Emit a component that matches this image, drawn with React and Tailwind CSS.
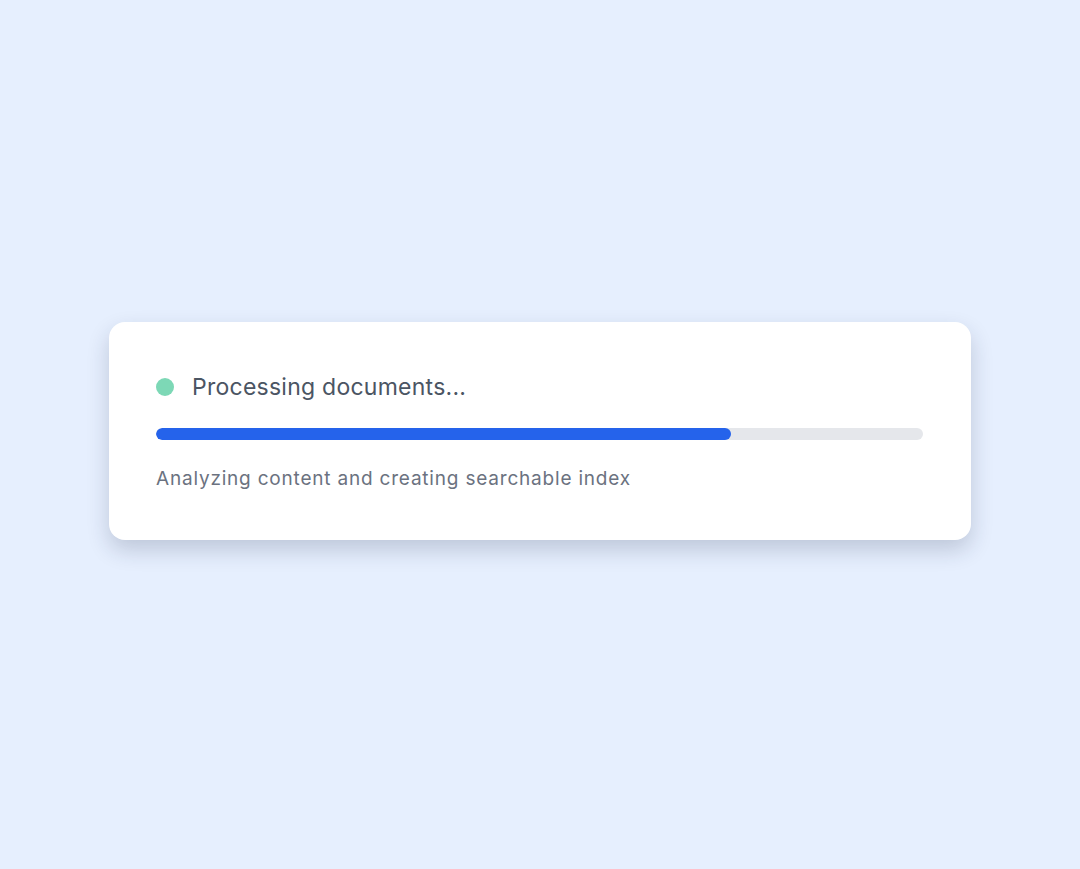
export default function App() {
  return (
    <div className="min-h-screen w-full bg-[#e6effe] flex items-center justify-center" style={{ fontFamily: 'Inter, "Noto Sans", sans-serif' }}>
      <div className="w-[862px] h-[218px] bg-white rounded-2xl shadow-[0_10px_22px_rgba(30,41,70,0.2)] px-[47px] pt-[49px] -mt-[7px]">
        <div className="flex items-center gap-[18px] h-[32px]">
          <span className="w-[18px] h-[18px] rounded-full bg-[#7dd8b6] shrink-0"></span>
          <span className="text-[23px] leading-[32px] tracking-[0.25px] text-[#4b5563]">Processing documents...</span>
        </div>
        <div className="mt-[25px] h-[12px] w-[767px] rounded-full bg-[#e5e7eb] overflow-hidden">
          <div className="h-full w-[75%] rounded-full bg-[#2563eb]"></div>
        </div>
        <div className="mt-[25px] text-[19px] leading-[28px] tracking-[0.8px] text-[#6b7280]">Analyzing content and creating searchable index</div>
      </div>
    </div>
  );
}
